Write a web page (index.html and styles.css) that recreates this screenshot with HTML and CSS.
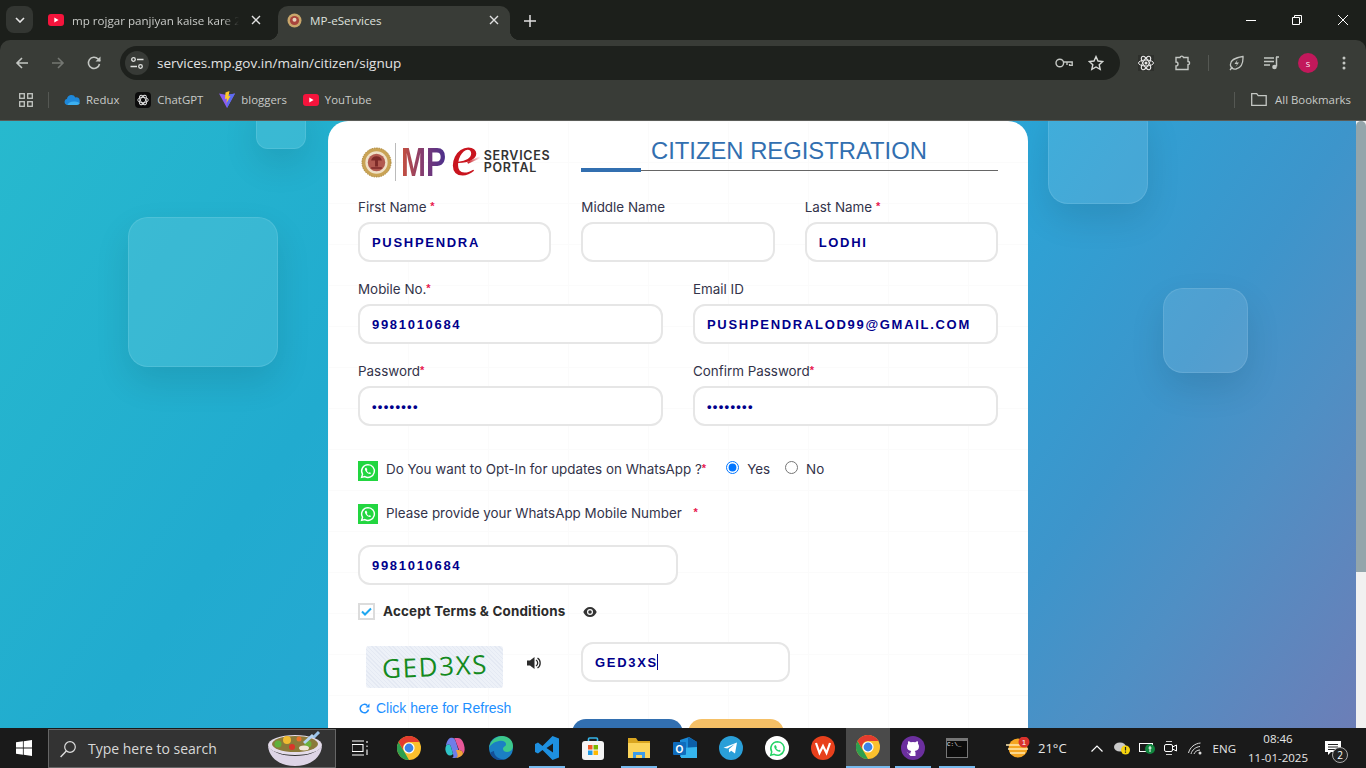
FILE: index.html
```html
<!DOCTYPE html>
<html lang="en">
<head>
    <meta charset="UTF-8">
    <meta name="viewport" content="width=device-width, initial-scale=1.0">
    <title>MP-eServices</title>
    <link rel="stylesheet" href="styles.css">
</head>
<body>
    <!-- shared icons -->
    <svg class="defs" width="0" height="0">
        <symbol id="chrome" viewBox="0 0 24 24">
            <circle cx="12" cy="12" r="12" fill="#fbc02d"/>
            <path d="M1.6 6 12 24a12 12 0 0 1-10.4-18z" fill="#2e9e4f"/>
            <path d="M1.6 6A12 12 0 0 1 22.4 6H12a6 6 0 0 0-5.2 9z" fill="#e33b2e"/>
            <circle cx="12" cy="12" r="5.6" fill="#fff"/>
            <circle cx="12" cy="12" r="4.4" fill="#3b82e6"/>
        </symbol>
        <symbol id="wa" viewBox="0 0 24 24">
            <path d="M12 3.5a8.5 8.5 0 0 0-7.3 12.8L3.5 20.5l4.3-1.1A8.5 8.5 0 1 0 12 3.5z" fill="none" stroke="currentColor" stroke-width="1.9"/>
            <path d="M9 7.8c-.7.3-1.2 1.1-1.1 2 .2 2.7 3.6 6.1 6.3 6.3.9 0 1.7-.5 2-1.3l-2.1-1.3-.9.8c-1-.4-2.4-1.8-2.8-2.8l.8-.9L10 7.8z" fill="currentColor"/>
        </symbol>
        <symbol id="yt" viewBox="0 0 16 12">
            <rect width="16" height="12" rx="3" fill="#f5143c"/>
            <path d="M6.3 3.4v5.2L10.6 6z" fill="#fff"/>
        </symbol>
    </svg>

    <!-- browser tabs -->
    <div class="tabstrip">
        <div class="tab-menu">
            <svg width="10" height="6" viewBox="0 0 10 6"><path d="M1 1l4 4 4-4" fill="none" stroke="#e6e6e6" stroke-width="1.6"/></svg>
        </div>
        <div class="tab">
            <svg class="tab-icon" width="16" height="12"><use href="#yt"/></svg>
            <span class="tab-title">mp rojgar panjiyan kaise kare 2025</span>
            <svg class="tab-close" width="10" height="10" viewBox="0 0 10 10"><path d="M1 1l8 8M9 1L1 9" stroke="#e0e0e0" stroke-width="1.4"/></svg>
        </div>
        <div class="tab tab-active">
            <svg class="tab-icon" width="15" height="15" viewBox="0 0 15 15"><circle cx="7.5" cy="7.5" r="7" fill="#c9a66b"/><circle cx="7.5" cy="7.5" r="4.6" fill="#a8443c"/><circle cx="7.5" cy="6.8" r="2" fill="#e8d4bc"/></svg>
            <span class="tab-title">MP-eServices</span>
            <svg class="tab-close" width="10" height="10" viewBox="0 0 10 10"><path d="M1 1l8 8M9 1L1 9" stroke="#e0e0e0" stroke-width="1.4"/></svg>
        </div>
        <svg class="new-tab" width="12" height="12" viewBox="0 0 12 12"><path d="M6 0v12M0 6h12" stroke="#e0e0e0" stroke-width="1.5"/></svg>
        <div class="window-btns">
            <svg width="10" height="10" viewBox="0 0 10 10"><path d="M0 5.5h10" stroke="#fff"/></svg>
            <svg width="10" height="10" viewBox="0 0 10 10"><path d="M.5 2.5h7v7h-7zM2.5 2.5V.5h7v7h-2" fill="none" stroke="#fff"/></svg>
            <svg width="10" height="10" viewBox="0 0 10 10"><path d="M0 0l10 10M10 0L0 10" stroke="#fff"/></svg>
        </div>
    </div>

    <!-- address bar -->
    <div class="toolbar">
        <svg class="tool" width="16" height="16" viewBox="0 0 16 16"><path d="M14 8H3M8 3L3 8l5 5" fill="none" stroke="#c4c7c3" stroke-width="1.6"/></svg>
        <svg class="tool nav-next" width="16" height="16" viewBox="0 0 16 16"><path d="M2 8h11M8 3l5 5-5 5" fill="none" stroke="#747772" stroke-width="1.6"/></svg>
        <svg class="tool nav-next" width="16" height="16" viewBox="0 0 16 16"><path d="M13.5 9a5.6 5.6 0 1 1-1.4-5L14 6" fill="none" stroke="#c4c7c3" stroke-width="1.6"/><path d="M14.5 1.5v5h-5z" fill="#c4c7c3"/></svg>
        <div class="urlbar">
            <span class="site-info">
                <svg width="14" height="14" viewBox="0 0 14 14"><g fill="none" stroke="#dfe1de" stroke-width="1.3"><circle cx="3.5" cy="3.5" r="1.8"/><path d="M7 3.5h6.5M.5 10.5H7"/><circle cx="10.5" cy="10.5" r="1.8"/></g></svg>
            </span>
            <span class="url">services.mp.gov.in/main/citizen/signup</span>
            <svg class="url-key" width="18" height="10" viewBox="0 0 18 10"><g fill="none" stroke="#c4c7c3" stroke-width="1.4"><circle cx="4.8" cy="5" r="3.8"/><path d="M8.6 4h8.6v3.4h-2.6V6M12 4v3"/></g></svg>
            <svg class="url-star" width="16" height="16" viewBox="0 0 16 16"><path d="M8 1.6l2 4.4 4.7.5-3.5 3.2 1 4.7L8 12l-4.2 2.4 1-4.7L1.3 6.5 6 6z" fill="none" stroke="#d6d8d5" stroke-width="1.4"/></svg>
        </div>
        <svg class="ext ext-react" width="16" height="16" viewBox="0 0 16 16"><rect width="16" height="16" fill="#2e302c"/><g fill="none" stroke="#e6e6e6"><ellipse cx="8" cy="8" rx="7.5" ry="3"/><ellipse cx="8" cy="8" rx="7.5" ry="3" transform="rotate(60 8 8)"/><ellipse cx="8" cy="8" rx="7.5" ry="3" transform="rotate(120 8 8)"/></g><circle cx="8" cy="8" r="1.5" fill="#e6e6e6"/></svg>
        <svg class="ext ext-puzzle" width="16" height="16" viewBox="0 0 16 16"><path d="M1 2.5h4a1.8 1.8 0 0 1 3.5 0H13v4a1.6 1.6 0 0 1 0 3.2v4.800H1V11a2 2 0 0 0 0-4z" fill="none" stroke="#c4c7c3" stroke-width="1.4"/></svg>
        <span class="tool-sep"></span>
        <svg class="ext ext-leaf" width="16" height="16" viewBox="0 0 16 16"><path d="M15 1.5c.3 7-1.5 11.500-7 12.500-3 .4-5-1.500-5.500-3.500C2 7 4.500 3 15 1.500zM2 15l2.500-3" fill="none" stroke="#c4c7c3" stroke-width="1.3"/><path d="M9.500 4.500L6.500 9h2.500L7.500 12 11 7.500H8.500z" fill="#c4c7c3"/></svg>
        <svg class="ext ext-music" width="16" height="14" viewBox="0 0 16 14"><path d="M0 2h10M0 5.500h10M0 9h6" stroke="#c4c7c3" stroke-width="1.3"/><path d="M12 1h3M12.500 1v9.500" stroke="#c4c7c3" stroke-width="1.5"/><circle cx="10.500" cy="11" r="2.300" fill="#c4c7c3"/></svg>
        <span class="avatar">S</span>
        <svg class="ext ext-dots" width="4" height="14" viewBox="0 0 4 14"><circle cx="2" cy="2" r="1.5" fill="#c4c7c3"/><circle cx="2" cy="7" r="1.5" fill="#c4c7c3"/><circle cx="2" cy="12" r="1.5" fill="#c4c7c3"/></svg>
    </div>

    <!-- bookmarks -->
    <div class="bookmarks">
        <svg width="14" height="14" viewBox="0 0 14 14"><g fill="none" stroke="#c4c7c3" stroke-width="1.3"><rect x=".7" y=".7" width="4.6" height="4.6"/><rect x="8.7" y=".7" width="4.6" height="4.6"/><rect x=".7" y="8.7" width="4.6" height="4.6"/><rect x="8.7" y="8.7" width="4.6" height="4.6"/></g></svg>
        <span class="bm-sep"></span>
        <div class="bm bm-redux">
            <svg width="16" height="11" viewBox="0 0 16 11"><path d="M3.500 11A3.200 3.200 0 0 1 3 4.700 4.500 4.500 0 0 1 11.400 3.400 3.800 3.800 0 0 1 12.500 11z" fill="#1e88d9"/><path d="M3.500 11c1-3 6-5 12.200-2 0 1-1.500 2-3.200 2z" fill="#3cb0f0"/></svg>
            <span>Redux</span>
        </div>
        <div class="bm">
            <span class="gpt-icon"><svg width="12" height="12" viewBox="0 0 12 12"><g fill="none" stroke="#ddd" stroke-width=".9"><ellipse cx="6" cy="6" rx="5.2" ry="2.6"/><ellipse cx="6" cy="6" rx="5.2" ry="2.6" transform="rotate(60 6 6)"/><ellipse cx="6" cy="6" rx="5.2" ry="2.6" transform="rotate(120 6 6)"/></g></svg></span>
            <span>ChatGPT</span>
        </div>
        <div class="bm">
            <svg width="16" height="17" viewBox="0 0 16 17"><path d="M0 2.500l8 14.500 8-14.500-8 1.500z" fill="#8a5cf0"/><path d="M8 4l8-1.500L8 17z" fill="#5b6cf0"/><path d="M10.500 0L6.500 1.500 6 8l2-.5-.5 4.500 4-7-2 .3z" fill="#ffc828"/></svg>
            <span>bloggers</span>
        </div>
        <div class="bm">
            <svg width="16" height="12"><use href="#yt"/></svg>
            <span>YouTube</span>
        </div>
        <span class="bm-sep bm-sep-right"></span>
        <div class="bm bm-all">
            <svg width="16" height="13" viewBox="0 0 16 13"><path d="M.7.700h5l1.500 2h8v9.600H.7z" fill="none" stroke="#c4c7c3" stroke-width="1.3"/></svg>
            <span>All Bookmarks</span>
        </div>
    </div>

    <div class="viewport">
        <main class="page">
            <span class="deco deco-a"></span>
            <span class="deco deco-b"></span>
            <span class="deco deco-c"></span>
            <span class="deco deco-d"></span>

            <div class="card">
                <!-- Logo and heading -->
                <div class="card-head">
                    <div class="logo">
                        <svg class="emblem" width="31" height="31" viewBox="0 0 32 32">
                            <circle cx="16" cy="16" r="15" fill="#c9a355" stroke="#a98538" stroke-dasharray="1.5 1"/>
                            <circle cx="16" cy="16" r="11.5" fill="#efe0c6"/>
                            <circle cx="16" cy="16" r="9" fill="#b25a50"/>
                            <path d="M10.500 14a5.500 4.500 0 0 1 11 0zM14.500 14h3v6h-3zM10.500 21h11v1.500h-11z" fill="#7d2a28"/>
                        </svg>
                        <span class="logo-line"></span>
                        <span class="logo-mp">MP</span>
                        <span class="logo-e">e</span>
                        <span class="logo-text">SERVICES<br>PORTAL</span>
                    </div>
                    <div class="title-block">
                        <h1>CITIZEN REGISTRATION</h1>
                    </div>
                </div>

                <div class="row row-3">
                    <div class="field">
                        <label>First Name <b>*</b></label>
                        <input type="text" value="PUSHPENDRA">
                    </div>
                    <div class="field">
                        <label>Middle Name</label>
                        <input type="text">
                    </div>
                    <div class="field">
                        <label>Last Name <b>*</b></label>
                        <input type="text" value="LODHI">
                    </div>
                </div>

                <div class="row row-2">
                    <div class="field">
                        <label>Mobile No.<b>*</b></label>
                        <input type="text" value="9981010684">
                    </div>
                    <div class="field">
                        <label>Email ID</label>
                        <input type="text" value="PUSHPENDRALOD99@GMAIL.COM">
                    </div>
                </div>

                <div class="row row-2">
                    <div class="field">
                        <label>Password<b>*</b></label>
                        <input type="password" value="password">
                    </div>
                    <div class="field">
                        <label>Confirm Password<b>*</b></label>
                        <input type="password" value="password">
                    </div>
                </div>

                <!-- WhatsApp -->
                <div class="wa-row wa-optin">
                    <span class="wa-icon"><svg width="18" height="18"><use href="#wa"/></svg></span>
                    <span class="wa-text">Do You want to Opt-In for updates on WhatsApp ?<b>*</b></span>
                    <label class="radio radio-yes"><input type="radio" name="wa" checked> Yes</label>
                    <label class="radio"><input type="radio" name="wa"> No</label>
                </div>
                <div class="wa-row wa-number">
                    <span class="wa-icon"><svg width="18" height="18"><use href="#wa"/></svg></span>
                    <span class="wa-text">Please provide your WhatsApp Mobile Number <b class="star-far">*</b></span>
                </div>
                <input class="wa-input" type="text" value="9981010684">

                <div class="terms">
                    <span class="checkbox"><svg width="11" height="9" viewBox="0 0 11 9"><path d="M1 4.500l3 3 6-6" fill="none" stroke="#1ea7f0" stroke-width="2"/></svg></span>
                    <span class="terms-text">Accept Terms &amp; Conditions</span>
                    <svg class="eye" width="14" height="10" viewBox="0 0 14 10"><path d="M7 0C4 0 1.500 2 .3 5 1.500 8 4 10 7 10s5.500-2 6.700-5C12.500 2 10 0 7 0zm0 8a3 3 0 1 1 0-6 3 3 0 0 1 0 6z" fill="#333"/><circle cx="7" cy="5" r="1.800" fill="#333"/></svg>
                </div>

                <!-- Captcha -->
                <div class="captcha-row">
                    <div class="captcha-left">
                        <div class="captcha-top">
                            <div class="captcha-img"><span>GED3XS</span></div>
                            <svg class="speaker" width="14" height="14" viewBox="0 0 14 14"><path d="M0 4.500h3L7.500 1v12L3 9.500H0z" fill="#2b2b2b"/><path d="M9 4a3.500 3.500 0 0 1 0 6M10.500 2a6 6 0 0 1 0 10" fill="none" stroke="#2b2b2b" stroke-width="1.3"/></svg>
                        </div>
                        <a class="refresh" href="#">
                            <svg width="11" height="11" viewBox="0 0 11 11"><path d="M9.500 6.500A4.200 4.200 0 1 1 8.300 2.500" fill="none" stroke="#1e90ff" stroke-width="1.5"/><path d="M10.500 .5v4h-4z" fill="#1e90ff"/></svg>
                            Click here for Refresh
                        </a>
                    </div>
                    <div class="captcha-input">GED3XS<span class="caret"></span></div>
                </div>

                <div class="buttons">
                    <button class="btn btn-blue" type="button"></button>
                    <button class="btn btn-orange" type="button"></button>
                </div>
            </div>
        </main>
        <div class="scrollbar"><span class="thumb"></span></div>
    </div>

    <!-- windows taskbar -->
    <footer class="taskbar">
        <svg class="win-logo" width="16" height="16" viewBox="0 0 16 16"><path d="M0 2.300l6.900-1v6.300H0zM7.700 1.200L16 0v7.600H7.700zM0 8.400h6.900v6.300l-6.900-1zM7.700 8.400H16V16l-8.300-1.200z" fill="#fff"/></svg>
        <div class="search">
            <svg width="16" height="18" viewBox="0 0 16 18"><circle cx="10" cy="7" r="5.300" fill="none" stroke="#ddd" stroke-width="1.2"/><path d="M6.300 11L.6 17" stroke="#ddd" stroke-width="1.4"/></svg>
            <span>Type here to search</span>
            <svg class="bowl" width="56" height="36" viewBox="0 0 56 36">
                <path d="M42 11L52 1" stroke="#9cc4ea" stroke-width="3"/>
                <ellipse cx="28" cy="14" rx="27" ry="10" fill="#e4dcea"/>
                <ellipse cx="28" cy="13" rx="23" ry="8" fill="#8a7a3a"/>
                <circle cx="20" cy="9" r="4" fill="#f0bc30"/><circle cx="11" cy="13" r="3.5" fill="#5fb03a"/><circle cx="25" cy="16" r="3" fill="#d9352a"/><circle cx="41" cy="13" r="3.5" fill="#6db03a"/><circle cx="32" cy="8" r="2.5" fill="#e8702a"/><ellipse cx="37" cy="17" rx="5" ry="2.5" fill="#f0e6d6"/>
                <path d="M37 12l9-8" stroke="#b4d4f2" stroke-width="3"/>
                <path d="M1 15c1 12 12 20 27 20s26-8 27-20c-4 6-14 10-27 10S5 21 1 15z" fill="#ddd4e6"/>
            </svg>
        </div>
        <svg class="taskview" width="16" height="16" viewBox="0 0 16 16"><path d="M0 1h12M0 15h12M0 4.500h11v7H0zM15 1v2M15 5.500v1.500M15 9.500V15" fill="none" stroke="#fff" stroke-width="1.1"/></svg>
        <div class="apps-row">
            <span class="app"><svg width="24" height="24"><use href="#chrome"/></svg></span>
            <span class="app"><svg width="24" height="24" viewBox="0 0 24 24"><path d="M7 2c3-1 5 0 6 4l3 10c.8 3-1 6-4 6H8c2 0 3-1 2-4L8 11c-1-3-3-3-5-1 0-3 2-7 4-8z" fill="#6f7de8"/><path d="M15 2c3 0 5 3 6 7 1 3 1 7-1 9 0-3-2-4-4-4l-3-8c-.5-2-1-3-2-4z" fill="#e8589a"/><path d="M3 10c2-2 4-2 5 1l2 7c-2 2-4 2-6 0-2-3-2-6-1-8z" fill="#2fc4c8"/><path d="M13 14h3c2 0 4 1 4 4-1 2-4 4-8 4 3 0 3-3 2-5z" fill="#f2a33c"/></svg></span>
            <span class="app"><svg width="24" height="24" viewBox="0 0 24 24"><circle cx="12" cy="12" r="12" fill="#1b7fc4"/><path d="M0 12C1 4 8 0 13 0c6 0 11 4 11 10 0 4-3 6-6 6-2 0-4-1-4-3 0-3 3-2 3-5 0-2-3-4-7-3C5 6 1 9 0 12z" fill="#3cc88c"/><path d="M5 15c0 5 5 9 11 8-5 3-13 0-15-6 1-1 3-2 4-2z" fill="#134f96"/></svg></span>
            <span class="app app-open"><svg width="24" height="24" viewBox="0 0 24 24"><path fill-rule="evenodd" d="M17.500 0L7.500 10 3 6.500 0 8v8l3 1.500 4.500-3.500 10 10 6.500-2.500V2.500zM18 7.500v9L11.500 12z" fill="#1e90e0"/></svg></span>
            <span class="app"><svg width="24" height="24" viewBox="0 0 24 24"><path d="M7.500 5V3a1 1 0 0 1 1-1h7a1 1 0 0 1 1 1v2" fill="none" stroke="#35b4e8" stroke-width="1.6"/><rect x="1" y="5" width="22" height="19" rx="3" fill="#f4f4f4"/><rect x="7" y="9" width="4.500" height="4.500" fill="#f05a28"/><rect x="12.500" y="9" width="4.500" height="4.500" fill="#7ab800"/><rect x="7" y="14.500" width="4.500" height="4.500" fill="#1e9be8"/><rect x="12.500" y="14.500" width="4.500" height="4.500" fill="#ffb900"/></svg></span>
            <span class="app app-open"><svg width="24" height="24" viewBox="0 0 24 24"><path d="M1 2h8l2 3h12v17H1z" fill="#d9a520"/><path d="M1 7h22v15H1z" fill="#fbd45b"/><path d="M6 22v-6h12v6h-3v-3H9v3z" fill="#3c9be8"/></svg></span>
            <span class="app"><svg width="24" height="24" viewBox="0 0 24 24"><path d="M7 4l9-3 8 5v15H7z" fill="#1a8ad8"/><path d="M15 1l9 5v6h-9z" fill="#0c5fa8"/><path d="M8 12l16-1v11H8z" fill="#35b5ee"/><rect x="0" y="6" width="13" height="13" rx="1" fill="#0f6cbd"/><text class="outlook-o" x="6.500" y="16.500">O</text></svg></span>
            <span class="app"><svg width="24" height="24" viewBox="0 0 24 24"><circle cx="12" cy="12" r="12" fill="#2a9fd8"/><path d="M4.500 11.800L18 6.500l-2 11-3.800-2.800-2 1.900-.4-3.300 6-5.300-7.500 4.600z" fill="#fff"/></svg></span>
            <span class="app"><span class="wa-round"><svg width="19" height="19"><use href="#wa"/></svg></span></span>
            <span class="app"><svg width="24" height="24" viewBox="0 0 24 24"><circle cx="12" cy="12" r="12" fill="#e8401c"/><path d="M5 7l3.500 10 3.500-7 3.500 7L19 7" fill="none" stroke="#fff" stroke-width="2.2"/></svg></span>
            <span class="app app-active"><svg width="24" height="24"><use href="#chrome"/></svg></span>
            <span class="app app-open"><svg width="24" height="24" viewBox="0 0 24 24"><circle cx="12" cy="12" r="12" fill="#6b2f9e"/><path d="M9.500 20v-2.500c-2.500.5-3.300-.8-3.800-2M14.500 20v-3c0-1-.3-1.500-.8-2 2.500-.3 4.300-1.500 4.300-4.500 0-1-.3-2-1-2.700.2-.8.100-1.800-.2-2.500-1 0-1.800.5-2.500 1a9 9 0 0 0-4.600 0c-.7-.5-1.500-1-2.500-1-.3.700-.4 1.700-.2 2.500-.7.700-1 1.700-1 2.700 0 3 1.800 4.200 4.300 4.500-.5.500-.8 1-.8 2V20z" fill="#fff"/></svg></span>
            <span class="app app-open app-cmd"><span class="cmd-icon">C:\_</span></span>
        </div>
        <div class="tray">
            <svg class="weather" width="24" height="22" viewBox="0 0 24 22"><circle cx="12" cy="11" r="9.500" fill="#f5a623"/><path d="M0 8h19M2 12h20M4 16h15" stroke="#ffe9b0" stroke-width="1.6"/><circle cx="18" cy="5" r="5.500" fill="#d9322c"/><text class="weather-num" x="18" y="8">1</text></svg>
            <span class="temp">21°C</span>
            <svg class="chev" width="12" height="7" viewBox="0 0 12 7"><path d="M.5 6.500L6 1l5.500 5.500" fill="none" stroke="#fff" stroke-width="1.2"/></svg>
            <svg class="tray-cloud" width="16" height="14" viewBox="0 0 16 14"><ellipse cx="6" cy="6" rx="6" ry="4.500" fill="#c9c9c9"/><circle cx="11.500" cy="9" r="4.500" fill="#f7d40e"/><path d="M11.500 6v3.500M11.500 10.500v1.200" stroke="#222" stroke-width="1.2"/></svg>
            <svg class="tray-batt" width="16" height="14" viewBox="0 0 16 14"><rect x=".5" y="2.500" width="13" height="8" fill="none" stroke="#fff"/><circle cx="11" cy="8" r="5" fill="#11863e"/><path d="M11 5v6M9.500 7h3" stroke="#fff"/></svg>
            <svg class="tray-cam" width="13" height="16" viewBox="0 0 13 16"><path d="M2 1.500h6M2 14.500h6" stroke="#ccc"/><rect x=".5" y="4.500" width="8" height="7" rx="1.500" fill="none" stroke="#fff"/><path d="M8.500 7l4-2v6l-4-2" fill="none" stroke="#fff"/></svg>
            <svg class="tray-wifi" width="15" height="13" viewBox="0 0 15 13"><path d="M.5 11C2 5 7 1.500 12.500 1M3 12c1-4 4.500-7 9-7.500M6 12c.6-2 3-4 6-4" fill="none" stroke="#ddd"/><circle cx="12" cy="11" r="1.500" fill="#ddd"/></svg>
            <span class="eng">ENG</span>
            <div class="clock"><span>08:46</span><span>11-01-2025</span></div>
            <div class="notif">
                <svg width="16" height="14" viewBox="0 0 16 14"><path d="M0 0h16v11H6l-3 3v-3H0z" fill="#fff"/><path d="M3 3.500h10M3 6h10M3 8.500h7" stroke="#222"/></svg>
                <span class="notif-count">2</span>
            </div>
        </div>
    </footer>
</body>
</html>
```

FILE: styles.css
```css
/* page frame */
* {
    box-sizing: border-box;
}

html, body {
    height: 100%;
}

body {
    margin: 0;
    width: 1366px;
    height: 768px;
    overflow: hidden;
    display: flex;
    flex-direction: column;
    font-family: "Open Sans", "Noto Sans", sans-serif;
    background-color: #1c1f1b;
}

.defs {
    position: absolute;
}

/* tabs */
.tabstrip {
    height: 40px;
    flex: none;
    display: flex;
    align-items: flex-start;
    padding: 6px 0 0 6px;
    background-color: #1c1f1b;
    color: #c9cbc8;
    font-size: 11.6px;
}

.tab-menu {
    width: 27px;
    height: 27px;
    margin-right: 1px;
    border-radius: 8px;
    background-color: #333632;
    display: flex;
    align-items: center;
    justify-content: center;
}

.tab {
    width: 244px;
    height: 34px;
    padding: 0 17px 6px 14px;
    display: flex;
    align-items: center;
    position: relative;
}

.tab-icon {
    flex: none;
    margin-right: 8px;
}

.tab-title {
    flex: 1;
    white-space: nowrap;
    overflow: hidden;
    -webkit-mask-image: linear-gradient(90deg, #000 90%, transparent);
    mask-image: linear-gradient(90deg, #000 90%, transparent);
}

.tab-close {
    flex: none;
    margin-left: 12px;
}

.tab-active {
    width: 232px;
    padding: 0 11px 6px 9px;
    background-color: #393c37;
    border-radius: 10px 10px 0 0;
    color: #dfe1de;
}

.tab-active .tab-title {
    -webkit-mask-image: none;
    mask-image: none;
}

.tab-active::before,
.tab-active::after {
    content: "";
    position: absolute;
    bottom: 0;
    width: 10px;
    height: 10px;
}

.tab-active::before {
    left: -10px;
    background: radial-gradient(circle at 0 0, transparent 10px, #393c37 10.5px);
}

.tab-active::after {
    right: -10px;
    background: radial-gradient(circle at 100% 0, transparent 10px, #393c37 10.5px);
}

.new-tab {
    margin: 9px 0 0 14px;
}

.window-btns {
    margin-left: auto;
    padding: 9px 18px 0 0;
    display: flex;
    gap: 36px;
}

/* toolbar */
.toolbar {
    height: 45px;
    flex: none;
    display: flex;
    align-items: center;
    padding: 1px 0 0 14px;
    background-color: #393c37;
    border-radius: 10px 10px 0 0;
}

.tool {
    flex: none;
}

.nav-next {
    margin-left: 20px;
}

.urlbar {
    width: 1000px;
    height: 34px;
    margin-left: 18px;
    padding: 0 16px 0 5px;
    border-radius: 17px;
    background-color: #1e211d;
    display: flex;
    align-items: center;
}

.site-info {
    width: 24px;
    height: 24px;
    border-radius: 50%;
    background-color: #373a36;
    display: flex;
    align-items: center;
    justify-content: center;
}

.url {
    margin-left: 8px;
    font-size: 13.5px;
    color: #e3e3e3;
}

.url-key {
    margin-left: auto;
}

.url-star {
    margin-left: 15px;
}

.ext {
    flex: none;
}

.ext-react {
    margin-left: 18px;
}

.ext-puzzle {
    margin-left: 21px;
}

.tool-sep {
    width: 1px;
    height: 16px;
    margin-left: 17px;
    background-color: #555853;
}

.ext-leaf {
    margin-left: 19px;
}

.ext-music {
    margin-left: 20px;
}

.avatar {
    width: 20px;
    height: 20px;
    margin-left: 18px;
    border-radius: 50%;
    background-color: #c2185b;
    color: #fff;
    font-size: 8px;
    display: flex;
    align-items: center;
    justify-content: center;
}

.ext-dots {
    margin-left: 24px;
}

/* bookmarks bar */
.bookmarks {
    height: 36px;
    flex: none;
    display: flex;
    align-items: center;
    padding: 0 15px 6px 19px;
    background-color: #393c37;
    border-bottom: 1px solid #5a5c58;
    font-size: 11.4px;
    color: #c8cac7;
}

.bm-sep {
    width: 1px;
    height: 16px;
    margin-left: 15px;
    background-color: #555853;
}

.bm {
    display: flex;
    align-items: center;
    gap: 6px;
    margin-left: 16px;
}

.bm-redux {
    margin-left: 15px;
}

.gpt-icon {
    width: 16px;
    height: 16px;
    border-radius: 4px;
    background-color: #0c0c0c;
    display: flex;
    align-items: center;
    justify-content: center;
}

.bm-sep-right {
    margin-left: auto;
}

.bm-all {
    gap: 8px;
}

/* page content */
.viewport {
    flex: 1;
    min-height: 0;
    display: flex;
}

.page {
    flex: 1;
    min-width: 0;
    position: relative;
    overflow: hidden;
    display: flex;
    justify-content: center;
    background: linear-gradient(125deg, #27b9ce 0%, #21abcf 29%, #2ba4d6 59%, #3d95cb 76%, #4f8fc4 85%, #6c7eb7 100%);
}

.deco {
    position: absolute;
    border-radius: 20px;
    background-color: rgba(255, 255, 255, 0.1);
    border: 1px solid rgba(255, 255, 255, 0.1);
    box-shadow: 0 15px 35px rgba(0, 0, 0, 0.1);
}

.deco-a {
    left: 256px;
    top: -22px;
    width: 50px;
    height: 50px;
    border-radius: 12px;
}

.deco-b {
    left: 128px;
    top: 96px;
    width: 150px;
    height: 150px;
}

.deco-c {
    left: 1048px;
    top: -17px;
    width: 100px;
    height: 100px;
}

.deco-d {
    left: 1163px;
    top: 167px;
    width: 85px;
    height: 85px;
}

.scrollbar {
    width: 10px;
    flex: none;
    background-color: #f1f1f1;
}

.thumb {
    display: block;
    height: 451px;
    border-radius: 5px 5px 0 0;
    background-color: #93a5ab;
}

.card {
    width: 700px;
    flex: none;
    position: relative;
    height: 760px;
    padding: 0 30px;
    border-radius: 20px 20px 0 0;
    background-color: #fff;
    background-image:
        linear-gradient(#fbfbfb 1px, transparent 1px),
        linear-gradient(90deg, #fbfbfb 1px, transparent 1px);
    background-size: 80px 41px, 80px 82px;
    font-family: "Inter", "Open Sans", sans-serif;
    font-size: 13.4px;
    color: #33334a;
}

.card b {
    font-family: "Liberation Sans", sans-serif;
    font-size: 11px;
    font-weight: 700;
    line-height: 0;
    color: #e8174f;
    vertical-align: 2px;
}

.card-head {
    height: 50px;
    display: flex;
}

.logo {
    width: 223px;
    height: 82px;
    flex: none;
    padding-left: 3px;
    display: flex;
    align-items: center;
}

.emblem {
    flex: none;
}

.logo-line {
    width: 1px;
    height: 38px;
    margin: 0 5px 0 3px;
    background-color: #bbb;
}

.logo-mp {
    font-family: "Liberation Sans", sans-serif;
    font-weight: 700;
    font-size: 40px;
    line-height: 36px;
    transform: scaleX(0.75);
    transform-origin: left;
    margin-right: -15px;
    background: linear-gradient(90deg, #c9503c, #7a3a78 55%, #4a2f8c);
    -webkit-background-clip: text;
    background-clip: text;
    color: transparent;
}

.logo-e {
    position: relative;
    font-family: "Liberation Serif", serif;
    font-style: italic;
    font-size: 60px;
    line-height: 36px;
    color: #c9141e;
    margin: -14px 6px 0 5px;
}

.logo-e::after {
    content: "";
    position: absolute;
    left: 16px;
    top: 22px;
    width: 14px;
    height: 2px;
    transform: rotate(-25deg);
    background: linear-gradient(90deg, #c9141e, transparent);
}

.logo-text {
    font-family: "Inter", sans-serif;
    font-size: 12.5px;
    font-weight: 600;
    line-height: 12px;
    letter-spacing: 0.7px;
    color: #333;
}

.title-block {
    flex: 1;
    position: relative;
    border-bottom: 1px solid #666;
    height: 50px;
    padding-left: 70px;
}

.title-block::after {
    content: "";
    position: absolute;
    left: 0;
    bottom: -2px;
    width: 60px;
    height: 4px;
    background-color: #326fb0;
}

.title-block h1 {
    margin: 15px 0 0;
    font-family: "Liberation Sans", sans-serif;
    font-weight: 400;
    font-size: 23.8px;
    line-height: 30px;
    color: #326fb0;
}

.row {
    display: grid;
    gap: 30px;
    margin-top: 17px;
}

.card-head + .row {
    margin-top: 26px;
}

.row-3 {
    grid-template-columns: repeat(3, 1fr);
}

.row-2 {
    grid-template-columns: repeat(2, 1fr);
}

.field label {
    display: block;
    height: 20px;
    line-height: 20px;
    margin-bottom: 5px;
}

input[type="text"], input[type="password"], .captcha-input {
    display: block;
    width: 100%;
    height: 40px;
    padding: 0 12px;
    border: 2px solid #e6e6e6;
    border-radius: 12px;
    outline: none;
    background-color: #fff;
    font-family: "Liberation Sans", sans-serif;
    font-size: 13px;
    font-weight: 700;
    letter-spacing: 1.7px;
    color: #00008b;
}

input[type="password"] {
    letter-spacing: 1.3px;
}

.wa-row {
    display: flex;
    align-items: center;
    height: 20px;
}

.wa-optin {
    margin-top: 35px;
}

.wa-number {
    margin-top: 23px;
}

.wa-icon {
    width: 20px;
    height: 20px;
    flex: none;
    background-color: #22d640;
    color: #fff;
    display: flex;
    align-items: center;
    justify-content: center;
}

.wa-text {
    margin: -4px 0 0 8px;
    white-space: nowrap;
}

.wa-number .wa-text {
    margin-top: -2px;
}

.star-far {
    margin-left: 8px;
}

.radio {
    display: flex;
    align-items: center;
    margin: -4px 0 0 15px;
    gap: 8px;
}

.radio input {
    width: 13px;
    height: 13px;
    margin: -3px 0 0;
}

.radio-yes {
    margin-left: 20px;
}

.wa-input.wa-input {
    width: 320px;
    margin-top: 21px;
}

.terms {
    margin-top: 18px;
    height: 17px;
    display: flex;
    align-items: center;
}

.checkbox {
    width: 17px;
    height: 17px;
    border: 2px solid #dcdcdc;
    display: flex;
    align-items: center;
    justify-content: center;
}

.terms-text {
    margin: -2px 0 0 8px;
    font-weight: 700;
    letter-spacing: 0.2px;
    color: #2b2b2b;
}

.eye {
    margin-left: 17px;
}

.captcha-row {
    margin-top: 22px;
    display: flex;
}

.captcha-left {
    width: 223px;
    flex: none;
    padding-top: 4px;
}

.captcha-top {
    display: flex;
    align-items: center;
    margin-left: 8px;
}

.captcha-img {
    width: 137px;
    height: 42px;
    border-radius: 3px;
    background-color: #edf1f8;
    background-image: repeating-linear-gradient(45deg, #e4e9f3 0 1px, transparent 1px 3px);
    display: flex;
    align-items: center;
    justify-content: center;
    font-family: "Open Sans", sans-serif;
    font-size: 26px;
    color: #148a1e;
}

.captcha-img span {
    display: block;
    margin-top: -2px;
    transform: rotate(-2.5deg);
    letter-spacing: 1.6px;
}

.speaker {
    margin: -8px 0 0 24px;
}

.refresh {
    display: flex;
    align-items: center;
    gap: 6px;
    margin: 10px 0 0 1px;
    height: 20px;
    font-family: "Liberation Sans", sans-serif;
    font-size: 14px;
    color: #1e90ff;
    text-decoration: none;
}

.captcha-input {
    width: 209px;
    display: flex;
    align-items: center;
}

.caret {
    width: 1px;
    height: 16px;
    margin-left: -1px;
    background-color: #00008b;
}

.buttons {
    display: flex;
    gap: 5px;
    margin: 1px 0 0 214px;
}

.btn {
    height: 40px;
    border: none;
    border-radius: 14px;
}

.btn-blue {
    width: 111px;
    background-color: #326fb0;
}

.btn-orange {
    width: 96px;
    background-color: #f5c066;
}

/* taskbar */
.taskbar {
    height: 40px;
    flex: none;
    display: flex;
    align-items: center;
    background-color: #1a1a1a;
    color: #fff;
}

.win-logo {
    margin-left: 16px;
    flex: none;
}

.search {
    width: 288px;
    height: 39px;
    margin: 1px 0 0 16px;
    padding-left: 11px;
    flex: none;
    display: flex;
    align-items: center;
    background-color: #333;
    border: 1px solid #666;
    font-size: 14px;
    color: #d8d8d8;
}

.search span {
    margin-left: 12px;
}

.bowl {
    margin-left: auto;
    margin-right: 12px;
}

.taskview {
    margin-left: 16px;
    flex: none;
}

.apps-row {
    display: flex;
    margin-left: 18px;
    height: 40px;
}

.app {
    width: 24px;
    height: 40px;
    margin: 0 11px;
    flex: none;
    position: relative;
    display: flex;
    align-items: center;
    justify-content: center;
}

.app-open::after {
    content: "";
    position: absolute;
    left: -6px;
    right: -6px;
    bottom: 0;
    height: 2px;
    background-color: #76b9ed;
}

.app-cmd {
    margin-left: 9px;
}

.app-active {
    width: 44px;
    margin: 0;
    background-color: #4a4a4a;
    border-bottom: 2px solid #76b9ed;
}

.outlook-o {
    font-family: "Liberation Sans", sans-serif;
    font-size: 10px;
    font-weight: 700;
    fill: #fff;
    text-anchor: middle;
}

.wa-round {
    width: 24px;
    height: 24px;
    border-radius: 50%;
    background-color: #fff;
    color: #25d366;
    display: flex;
    align-items: center;
    justify-content: center;
}

.cmd-icon {
    width: 22px;
    height: 20px;
    background-color: #0c0c0c;
    border: 1px solid #777;
    border-top-width: 3px;
    font-family: "Liberation Mono", monospace;
    font-size: 6px;
    line-height: 8px;
    color: #eee;
}

.tray {
    margin-left: auto;
    display: flex;
    align-items: center;
    height: 40px;
    font-size: 11.5px;
    color: #e6e6e6;
}

.temp {
    margin-left: 8px;
    font-size: 13px;
}

.weather-num {
    font-family: "Liberation Sans", sans-serif;
    font-size: 8px;
    fill: #fff;
    text-anchor: middle;
}

.chev {
    margin-left: 24px;
}

.tray-cloud {
    margin-left: 11px;
}

.tray-batt {
    margin-left: 9px;
}

.tray-cam {
    margin-left: 9px;
}

.tray-wifi {
    margin-left: 11px;
}

.eng {
    margin-left: 10px;
}

.clock {
    width: 72px;
    margin-left: 6px;
    display: flex;
    flex-direction: column;
    align-items: center;
    line-height: 19px;
}

.notif {
    position: relative;
    width: 41px;
    height: 40px;
    margin-left: 11px;
    display: flex;
    align-items: center;
}

.notif-count {
    position: absolute;
    left: 7px;
    top: 19px;
    width: 16px;
    height: 16px;
    border: 1px solid #aaa;
    border-radius: 50%;
    background-color: #222;
    font-size: 10px;
    line-height: 14px;
    text-align: center;
    color: #fff;
}
```
